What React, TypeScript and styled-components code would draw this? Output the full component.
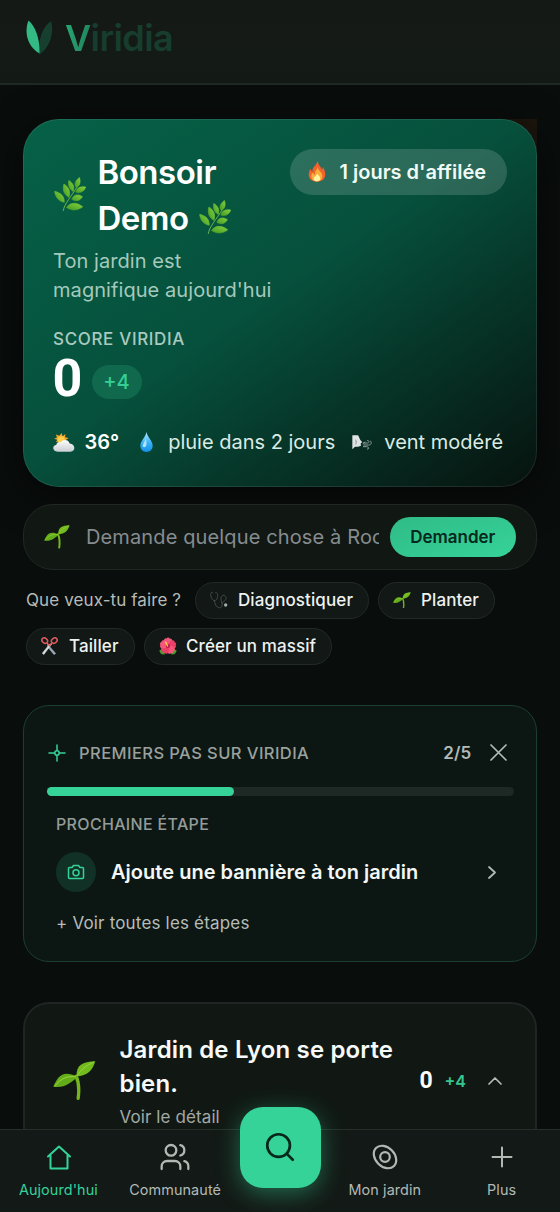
import React from "react";
import styled, { createGlobalStyle } from "styled-components";
import { Users, Search } from "lucide-react";

const Global = createGlobalStyle`
  * { box-sizing: border-box; }
  html, body { margin: 0; background: #090d0c; }
  body {
    height: 1212px;
    overflow: hidden;
    font-family: Inter, "Liberation Sans", sans-serif;
    color: #fff;
  }
  button, input { font: inherit; border: 0; padding: 0; background: none; color: inherit; }
  svg { display: block; flex: none; }
`;

const Page = styled.div`
  height: 1212px;
  overflow: hidden;
  display: flex;
  flex-direction: column;
  background: #090d0c;
`;

const Header = styled.header`
  flex: none;
  height: 85px;
  padding: 0 0 8px 26px;
  display: flex;
  align-items: center;
  gap: 12px;
  background: linear-gradient(#151915, #131a16);
  border-bottom: 2px solid #1f2823;
`;

const Wordmark = styled.span`
  margin-left: -1px;
  font-size: 36px;
  line-height: 40px;
  font-weight: 600;
  letter-spacing: -0.6px;
  color: #173d2e;
`;

const WordmarkLead = styled.span`
  background: linear-gradient(100deg, #2aa875, #1f7f5a);
  background-clip: text;
  color: transparent;
`;

const Main = styled.main`
  flex: 1;
  min-height: 0;
  overflow: hidden;
  padding: 34px 23px 0;
  display: flex;
  flex-direction: column;
`;

const HeroShell = styled.div`
  flex: none;
  background: linear-gradient(#1b150d, #1b150d) right top / 30px 30px no-repeat;
`;

const Hero = styled.section`
  height: 368px;
  padding: 28.5px;
  border: 1.5px solid rgba(255, 255, 255, 0.09);
  border-radius: 36px;
  background: linear-gradient(145deg, #066147 0%, #06503c 48%, #07120e 100%) border-box;
  box-shadow: 0 10px 40px rgba(0, 0, 0, 0.55);
`;

const HeroTop = styled.div`
  margin-right: 1px;
  display: flex;
  justify-content: space-between;
  align-items: flex-start;
`;

const Greeting = styled.div`
  padding-left: 1px;
  display: flex;
  align-items: center;
  gap: 12px;
`;

const Title = styled.h1`
  margin: 0;
  font-size: 33px;
  line-height: 46px;
  font-weight: 600;
  letter-spacing: -0.5px;
`;

const TitleLine = styled.span`
  display: flex;
  align-items: center;
  gap: 10px;
`;

const Subtitle = styled.p`
  margin: 6.5px 0 0 0.5px;
  width: 236px;
  font-size: 20px;
  line-height: 29px;
  letter-spacing: 0.07px;
  color: #a5c9bc;
`;

const Streak = styled.div`
  height: 46px;
  width: 217px;
  padding-left: 18px;
  display: flex;
  align-items: center;
  gap: 14px;
  border-radius: 23px;
  background: rgba(255, 255, 255, 0.15);
  font-size: 20px;
  font-weight: 600;
  white-space: nowrap;
  color: #f0fbf6;
`;

const ScoreLabel = styled.div`
  margin: 21.5px 0 0 0.5px;
  font-size: 17px;
  line-height: 24px;
  font-weight: 500;
  letter-spacing: 0.65px;
  color: #a9cabf;
`;

const ScoreRow = styled.div`
  display: flex;
  align-items: center;
  gap: 10px;
  height: 56px;
`;

const Score = styled.span`
  width: 29px;
  font-family: Roboto, Inter, sans-serif;
  font-size: 52px;
  line-height: 56px;
  font-weight: 700;
`;

const Delta = styled.span`
  margin-top: 6px;
  width: 50px;
  height: 34px;
  border-radius: 17px;
  background: #10694d;
  color: #35cf96;
  font-size: 20px;
  line-height: 34px;
  font-weight: 500;
  text-align: center;
`;

const Weather = styled.div`
  margin-top: 20.5px;
  display: flex;
  align-items: center;
  font-size: 20px;
  line-height: 30px;
  white-space: nowrap;
  color: #dcebe5;
`;

const WeatherItem = styled.span<{ $gap: number; $next?: number; $strong?: boolean }>`
  display: flex;
  align-items: center;
  gap: ${(p) => p.$gap}px;
  margin-right: ${(p) => p.$next ?? 0}px;
  font-weight: ${(p) => (p.$strong ? 600 : 400)};
  color: ${(p) => (p.$strong ? "#fff" : "inherit")};
`;

const AskBar = styled.div`
  flex: none;
  margin-top: 17px;
  height: 66px;
  padding: 0 20px 0 20px;
  display: flex;
  align-items: center;
  border: 1.5px solid #202824;
  border-radius: 30px;
  background: #111814;
`;

const AskInput = styled.input`
  flex: 1;
  min-width: 0;
  margin: 0 11px 0 16px;
  height: 40px;
  outline: 0;
  font-size: 20px;
  letter-spacing: 0.13px;
  &::placeholder { color: #868c90; opacity: 1; }
`;

const AskButton = styled.button`
  width: 126.5px;
  height: 40px;
  border-radius: 20px;
  background: linear-gradient(160deg, #30bb86, #36d399);
  color: #07281c;
  font-size: 17px;
  font-weight: 600;
`;

const Chips = styled.div`
  flex: none;
  margin-top: 12px;
  padding-left: 3px;
  display: flex;
  flex-wrap: wrap;
  align-items: center;
  gap: 9px;
`;

const ChipsLabel = styled.span`
  width: 160px;
  padding-bottom: 1px;
  font-size: 17px;
  letter-spacing: 0.1px;
  white-space: nowrap;
  color: #b6bbb8;
`;

const Chip = styled.button<{ $w: number; $gap?: number }>`
  width: ${(p) => p.$w}px;
  height: 37px;
  padding: 0 0 1px 14px;
  display: flex;
  align-items: center;
  gap: ${(p) => p.$gap ?? 10}px;
  border: 1.5px solid #222a26;
  border-radius: 19px;
  background: #111815;
  font-size: 17px;
  font-weight: 500;
  letter-spacing: 0.1px;
  white-space: nowrap;
  color: #eef2f0;
`;

const Steps = styled.section`
  flex: none;
  margin-top: 40px;
  height: 257px;
  padding: 32.5px 22.5px 0 23px;
  border: 1.5px solid #1c3e31;
  border-radius: 26px;
  background: #0c1713;
`;

const StepsHead = styled.div`
  height: 28px;
  display: flex;
  align-items: center;
  color: #34d399;
`;

const StepsTitle = styled.h2`
  flex: 1;
  margin: 0 0 0 12px;
  font-size: 16.5px;
  font-weight: 500;
  letter-spacing: 0.43px;
  color: #9aa19e;
`;

const Count = styled.span`
  margin-right: 18px;
  font-size: 17px;
  font-weight: 600;
  letter-spacing: 0.2px;
  color: #b3bab7;
`;

const IconButton = styled.button<{ $right: number }>`
  margin-right: ${(p) => p.$right}px;
  color: #b3bab7;
`;

const Track = styled.div`
  margin-top: 20.5px;
  height: 9px;
  border-radius: 5px;
  background: #1e2824;
`;

const Bar = styled.div`
  height: 100%;
  border-radius: 5px;
  background: #36d399;
`;

const NextLabel = styled.div`
  margin: 16px 0 0 9px;
  font-size: 16px;
  line-height: 24px;
  font-weight: 500;
  letter-spacing: 0.33px;
  color: #949b98;
`;

const NextRow = styled.div`
  margin: 16px 17.5px 0 9px;
  height: 40px;
  display: flex;
  align-items: center;
  justify-content: space-between;
  color: #b3bab7;
`;

const NextTask = styled.div`
  display: flex;
  align-items: center;
  gap: 15px;
  font-size: 20px;
  font-weight: 600;
  letter-spacing: 0.03px;
  white-space: nowrap;
  color: #f4f7f5;
`;

const RoundIcon = styled.span`
  width: 40px;
  height: 40px;
  display: grid;
  place-items: center;
  border-radius: 50%;
  background: #113126;
  color: #34d399;
`;

const SeeAll = styled.div`
  margin: 19px 0 0 9px;
  font-size: 17px;
  line-height: 24px;
  letter-spacing: 0.18px;
  color: #b6bcb9;
`;

const Garden = styled.section`
  flex: none;
  margin-top: 40px;
  height: 200px;
  padding: 28.5px 33px 0 28px;
  border: 2px solid #1e2522;
  border-radius: 26px;
  background: #111814;
  display: flex;
  align-items: flex-start;
`;

const GardenText = styled.div`
  margin-left: 23.5px;
  flex: 1;
`;

const GardenTitle = styled.h2`
  margin: 0;
  font-size: 24px;
  line-height: 34px;
  font-weight: 600;
  letter-spacing: 0.15px;
  white-space: nowrap;
  color: #f7faf8;
`;

const GardenLink = styled.div`
  margin-top: 4px;
  font-size: 17px;
  line-height: 24px;
  letter-spacing: 0.1px;
  color: #a3a9a6;
`;

const GardenScore = styled.div`
  height: 96px;
  display: flex;
  align-items: center;
  color: #b3bab7;
`;

const GardenValue = styled.span`
  margin-right: 12px;
  font-family: Roboto, Inter, sans-serif;
  font-size: 23px;
  font-weight: 700;
  color: #fff;
`;

const GardenDelta = styled.span`
  font-size: 16px;
  font-weight: 600;
  color: #34c78f;
  margin-right: 22px;
`;

const SproutSlot = styled.div`
  padding-top: 28px;
`;

const Nav = styled.nav`
  position: fixed;
  left: 0;
  right: 0;
  top: 1129px;
  height: 83px;
  display: grid;
  grid-template-columns: 1fr 1fr 93px 1fr 1fr;
  background: #131916;
  border-top: 1.5px solid #26302b;
`;

const Tab = styled.a<{ $active?: boolean }>`
  padding-top: 11px;
  display: flex;
  flex-direction: column;
  align-items: center;
  gap: 7px;
  font-size: 14.4px;
  line-height: 20px;
  letter-spacing: 0.1px;
  white-space: nowrap;
  color: ${(p) => (p.$active ? "#34d399" : "#b2b9b5")};
`;

const SearchButton = styled.button`
  position: relative;
  top: -23.5px;
  justify-self: center;
  width: 81px;
  height: 81px;
  display: grid;
  place-items: center;
  border-radius: 23px;
  background: #36d399;
  color: #06281c;
  box-shadow: 0 6px 24px rgba(52, 211, 153, 0.42);
`;

const Logo = () => (
  <svg width="28" height="35" viewBox="0 0 28 35">
    <path d="M25 1C17 7 12 17 13.500 34.500C22 29 29 15 25 1Z" fill="#173f2f" />
    <path d="M2.500 .5C-2 12 1 26 13.500 33.500C14 20 10 7 2.500 .5Z" fill="#33b983" />
  </svg>
);

const herbLeaves = [
  "M31 75C14 72 4 60 2 42C19 46 32 56 31 75Z",
  "M45 60C30 52 25 37 30 20C45 29 51 44 45 60Z",
  "M58 42C45 34 42 22 45 9C58 17 63 29 58 42Z",
  "M67 30C60 20 65 9 77 0C82 14 78 26 67 30Z",
  "M66 44C69 31 80 26 96 29C92 42 80 49 66 44Z",
  "M54 66C59 52 72 49 86 58C79 71 66 74 54 66Z",
  "M38 91C49 75 68 74 87 89C72 101 53 101 38 91Z",
];

const Herb = () => (
  <svg width="32" height="35" viewBox="0 -1 97 105">
    <defs>
      <linearGradient id="herb" x1="1" y1="0" x2="0" y2="1">
        <stop offset="0" stopColor="#84cf3e" />
        <stop offset="1" stopColor="#459c22" />
      </linearGradient>
    </defs>
    <path d="M28 101C31 80 52 58 73 24" fill="none" stroke="#6db746" strokeWidth="3" />
    {herbLeaves.map((d) => (
      <path key={d} d={d} fill="url(#herb)" stroke="url(#herb)" strokeWidth="2" strokeLinejoin="round" />
    ))}
  </svg>
);

const Sprout = ({ w }: { w: number }) => (
  <svg width={w} height={(w * 118) / 130} viewBox="0 0 130 118">
    <path d="M70 46C79 66 79 92 76 113" fill="none" stroke="#75b51e" strokeWidth="10" strokeLinecap="round" />
    <path d="M73 47C28 26 14 48 1 78C36 83 52 66 73 50Z" fill="#64ad1a" />
    <path d="M71 47C70 11 89 3 128 1C119 30 105 44 71 47Z" fill="#72ba1d" />
    <path d="M5 76C27 50 43 45 69 48M74 44C84 26 100 14 124 3" fill="none" stroke="#9ad540" strokeWidth="3" />
  </svg>
);

const Fire = () => (
  <svg width="18" height="21" viewBox="0 0 50 62" preserveAspectRatio="none">
    <path d="M26 0C31 16 37 18 39 25C41 24 41 20 41 17C52 34 52 61 25 61C-2 61-1 36 7 22C8 28 10 30 13 31C10 18 24 14 26 0Z" fill="#f2622b" />
    <path d="M27 17C27 29 40 32 40 44C40 54 34 60 25 60C15 60 9 54 9 45C9 40 11 37 14 34C15 39 17 40 20 40C17 31 26 26 27 17Z" fill="#fcae3b" />
    <path d="M26 36C27 43 34 44 34 51C34 57 30 60 25 60C19 60 15 56 16 50C17 46 24 44 26 36Z" fill="#fff2a0" />
  </svg>
);

const CloudSun = () => (
  <svg width="22" height="19" viewBox="0 0 62 54">
    <defs>
      <linearGradient id="cloud" x1="0" y1="0" x2="0" y2="1">
        <stop offset="0" stopColor="#fdfdfd" />
        <stop offset="1" stopColor="#c9ced2" />
      </linearGradient>
    </defs>
    <path d="M24 0L27 9L35 3L34 12L44 14L36 20L8 26L12 19L3 16L11 13L8 4L18 8Z" fill="#f4a82b" />
    <circle cx="23" cy="19" r="10" fill="#ffcf4a" />
    <path d="M13 53C-3 53-3 35 9 34C10 26 18 24 22 27C27 17 44 18 47 30C64 31 65 53 49 53Z" fill="url(#cloud)" />
  </svg>
);

const Drop = () => (
  <svg width="13" height="20" viewBox="0 0 38 58">
    <defs>
      <linearGradient id="drop" x1="0" y1="0" x2="0" y2="1">
        <stop offset="0" stopColor="#b8e9ff" />
        <stop offset=".55" stopColor="#36b1f5" />
        <stop offset="1" stopColor="#1391e8" />
      </linearGradient>
    </defs>
    <path d="M19 0C22 16 37 26 37 40C37 51 29 58 19 58C9 58 1 51 1 40C1 26 16 16 19 0Z" fill="url(#drop)" />
    <path d="M17 16C16 28 8 32 8 42C13 47 19 43 19 35Z" fill="#dff5ff" opacity=".75" />
  </svg>
);

const Wind = () => (
  <svg width="20" height="15" viewBox="0 0 60 45">
    <path d="M1 1H18C22 6 22 11 25 15L31 22L26 25L27 32L18 35L9 35L1 43Z" fill="#dfe3e2" />
    <path d="M9 12C17 17 17 24 10 31Z" fill="#a9b4b0" />
    <path d="M33 24H46C54 24 51 14 45 17M34 30H50C60 30 59 18 54 18M33 35H43C52 35 52 44 45 42M32 27L40 20" fill="none" stroke="#8fa098" strokeWidth="3" />
  </svg>
);

const Stethoscope = () => (
  <svg width="18" height="18" viewBox="0 0 54 54" fill="none">
    <path d="M9 4C0 2 1 14 5 22C9 32 21 30 22 20C24 12 23 3 16 5M13 28C15 43 22 52 31 50C43 46 31 31 33 20C36 8 49 12 48 23C47 32 35 29 38 39" stroke="#434b49" strokeWidth="3" />
    <circle cx="47" cy="42" r="5" fill="#a5adab" />
  </svg>
);

const Scissors = () => (
  <svg width="17" height="18" viewBox="0 0 50 52" fill="none">
    <path d="M19 21L43 48L38 51L21 30Z" fill="#9fb0bb" stroke="#9fb0bb" strokeWidth="2" />
    <path d="M31 21L8 51L4 47L26 20Z" fill="#d5dde2" stroke="#d5dde2" strokeWidth="2" />
    <ellipse cx="11" cy="10" rx="9" ry="7" transform="rotate(35 11 10)" stroke="#dc5b60" strokeWidth="4.500" />
    <ellipse cx="39" cy="10" rx="9" ry="7" transform="rotate(-35 39 10)" stroke="#dc5b60" strokeWidth="4.500" />
    <path d="M17 16L25 25L33 16" stroke="#dc5b60" strokeWidth="4" />
  </svg>
);

const Hibiscus = () => (
  <svg width="18" height="18" viewBox="0 0 52 52">
    <path d="M1 38L14 34L17 50C8 52 3 48 1 38ZM51 38L38 34L35 50C44 52 49 48 51 38Z" fill="#4c9b2f" />
    {[0, 72, 144, 216, 288].map((a) => (
      <path key={a} d="M26 26C10 18 12 2 22 4L26 1L31 4C42 4 41 19 26 26Z" fill={a % 144 ? "#ec3f68" : "#f5577b"} transform={`rotate(${a} 26 26)`} />
    ))}
    <circle cx="26" cy="26" r="6" fill="#b81845" />
    <path d="M25 26L19 15" stroke="#ffd04a" strokeWidth="4" strokeLinecap="round" />
  </svg>
);

type StrokeProps = { w: number; h: number; d?: string; sw?: number; children?: React.ReactNode };

const Stroke = ({ w, h, d, sw = 1.7, children }: StrokeProps) => (
  <svg width={w} height={h} viewBox={`0 0 ${w} ${h}`} fill="none" stroke="currentColor" strokeWidth={sw} strokeLinecap="round" strokeLinejoin="round">
    {d && <path d={d} />}
    {children}
  </svg>
);

export default function App() {
  return (
    <Page>
      <Global />
      <Header>
        <Logo />
        <Wordmark>
          <WordmarkLead>V</WordmarkLead>iridia
        </Wordmark>
      </Header>

      <Main>
        <HeroShell>
          <Hero>
            <HeroTop>
              <Greeting>
                <Herb />
                <Title>
                  <TitleLine>Bonsoir</TitleLine>
                  <TitleLine>
                    Demo <Herb />
                  </TitleLine>
                </Title>
              </Greeting>
              <Streak>
                <Fire />
                1 jours d'affilée
              </Streak>
            </HeroTop>
            <Subtitle>Ton jardin est magnifique aujourd'hui</Subtitle>
            <ScoreLabel>SCORE VIRIDIA</ScoreLabel>
            <ScoreRow>
              <Score>0</Score>
              <Delta>+4</Delta>
            </ScoreRow>
            <Weather>
              <WeatherItem $gap={10} $next={21} $strong>
                <CloudSun />
                36°
              </WeatherItem>
              <WeatherItem $gap={15} $next={17}>
                <Drop />
                pluie dans 2 jours
              </WeatherItem>
              <WeatherItem $gap={12}>
                <Wind />
                vent modéré
              </WeatherItem>
            </Weather>
          </Hero>
        </HeroShell>

        <AskBar>
          <Sprout w={26} />
          <AskInput placeholder="Demande quelque chose à Rocky" />
          <AskButton>Demander</AskButton>
        </AskBar>

        <Chips>
          <ChipsLabel>Que veux-tu faire ?</ChipsLabel>
          <Chip $w={174}>
            <Stethoscope />
            Diagnostiquer
          </Chip>
          <Chip $w={117}>
            <Sprout w={18} />
            Planter
          </Chip>
          <Chip $w={109} $gap={11}>
            <Scissors />
            Tailler
          </Chip>
          <Chip $w={188} $gap={9}>
            <Hibiscus />
            Créer un massif
          </Chip>
        </Chips>

        <Steps>
          <StepsHead>
            <Stroke w={20} h={20} sw={1.5} d="M10 2V7.500M10 12.500V18M2 10H7.500M12.500 10H18">
              <circle cx="10" cy="10" r="2.200" />
            </Stroke>
            <StepsTitle>PREMIERS PAS SUR VIRIDIA</StepsTitle>
            <Count>2/5</Count>
            <IconButton $right={7} aria-label="Fermer">
              <Stroke w={17} h={17} d="M1 1L16 16M16 1L1 16" />
            </IconButton>
          </StepsHead>
          <Track>
            <Bar style={{ width: `${(2 / 5) * 100}%` }} />
          </Track>
          <NextLabel>PROCHAINE ÉTAPE</NextLabel>
          <NextRow>
            <NextTask>
              <RoundIcon>
                <Stroke w={18} h={16} sw={1.5} d="M2.500 3.500H5L6.500 1.500H11.500L13 3.500H15.500A1 1 0 0 1 16.500 4.500V13.500A1 1 0 0 1 15.500 14.500H2.500A1 1 0 0 1 1.500 13.500V4.500A1 1 0 0 1 2.500 3.500Z">
                  <circle cx="9" cy="8.700" r="3" />
                </Stroke>
              </RoundIcon>
              Ajoute une bannière à ton jardin
            </NextTask>
            <Stroke w={8} h={13} d="M1 1L7 6.500L1 12" />
          </NextRow>
          <SeeAll>+ Voir toutes les étapes</SeeAll>
        </Steps>

        <Garden>
          <SproutSlot>
            <Sprout w={43} />
          </SproutSlot>
          <GardenText>
            <GardenTitle>
              Jardin de Lyon se porte
              <br />
              bien.
            </GardenTitle>
            <GardenLink>Voir le détail</GardenLink>
          </GardenText>
          <GardenScore>
            <GardenValue>0</GardenValue>
            <GardenDelta>+4</GardenDelta>
            <Stroke w={14} h={8} d="M1 7L7 1L13 7" />
          </GardenScore>
        </Garden>
      </Main>

      <Nav>
        <Tab $active>
          <Stroke w={27} h={32} sw={2} d="M3 15.500L14 5.500L25 15.500M5.500 14V27.500H22.500V14" />
          Aujourd'hui
        </Tab>
        <Tab>
          <Users size={32} strokeWidth={1.7} />
          Communauté
        </Tab>
        <SearchButton aria-label="Rechercher">
          <Search size={34} strokeWidth={1.9} />
        </SearchButton>
        <Tab>
          <Stroke w={32} h={32} sw={2.2}>
            <ellipse cx="16" cy="16" rx="12.700" ry="9.500" transform="rotate(45 16 16)" />
            <circle cx="16" cy="16" r="4.800" />
          </Stroke>
          Mon jardin
        </Tab>
        <Tab>
          <Stroke w={32} h={32} sw={2} d="M16 6.500V25.500M6.500 16H25.500" />
          Plus
        </Tab>
      </Nav>
    </Page>
  );
}
